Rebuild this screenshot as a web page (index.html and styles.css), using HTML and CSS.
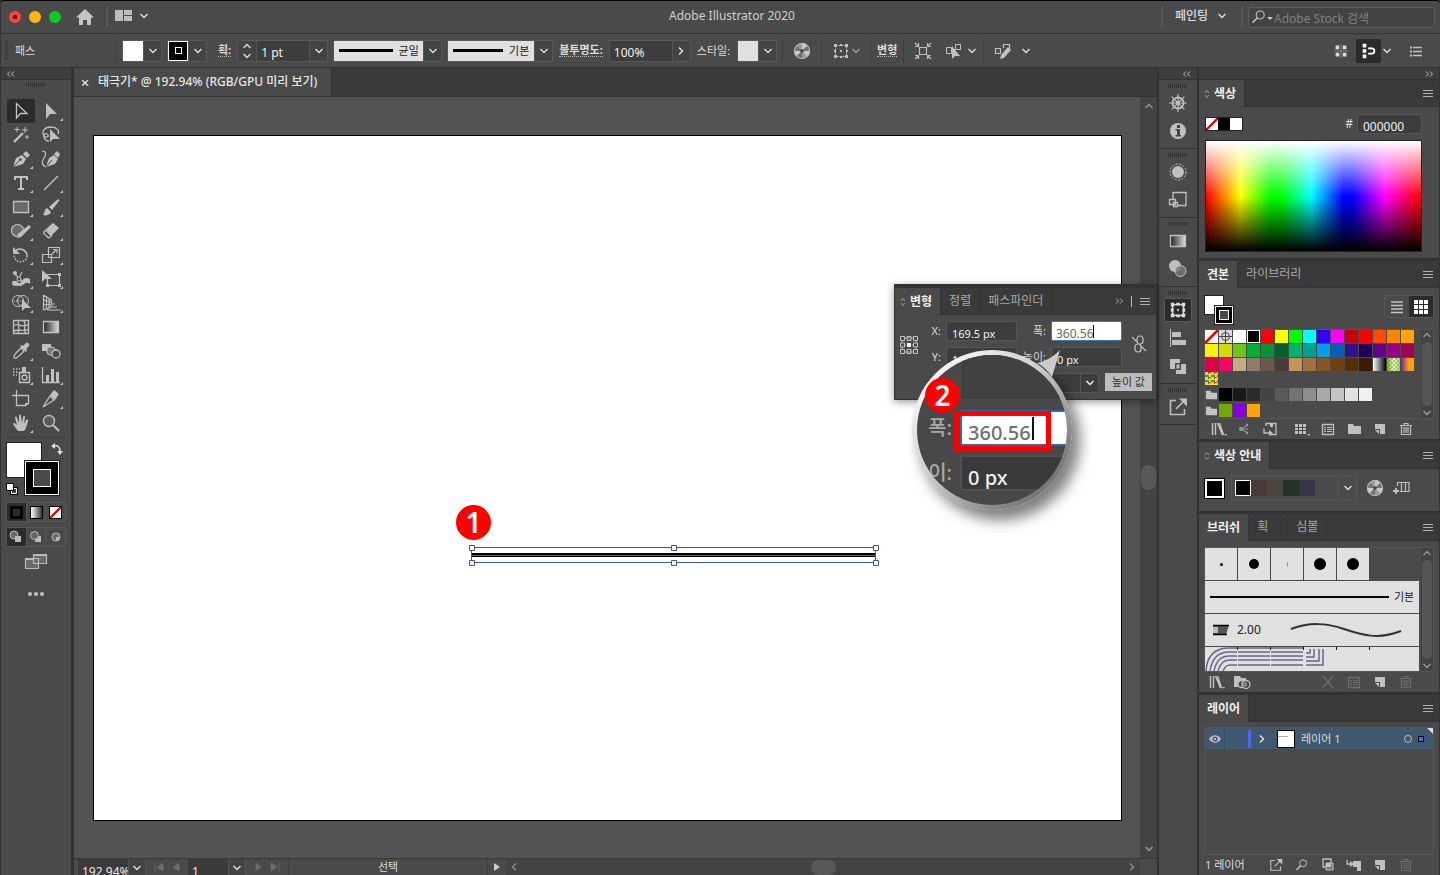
FILE: index.html
```html
<!DOCTYPE html>
<html lang="ko">
  <head>
    <meta charset="UTF-8" />
    <meta name="viewport" content="width=device-width, initial-scale=1.0" />
    <title>Adobe Illustrator 2020</title>
    <link rel="stylesheet" href="styles.css" />
  </head>
  <body>
    <!-- shared icons -->
    <svg class="defs" aria-hidden="true">
      <defs>
        <linearGradient id="fade"><stop offset="0" stop-color="#222" /><stop offset="1" stop-color="#ddd" /></linearGradient>
      </defs>
      <symbol id="down" viewBox="0 0 10 10"><path d="M1.500 3 5 6.500 8.500 3" fill="none" stroke="currentColor" stroke-width="1.500" /></symbol>
      <symbol id="up" viewBox="0 0 10 10"><path d="M1.500 7 5 3.500 8.500 7" fill="none" stroke="currentColor" stroke-width="1.300" /></symbol>
      <symbol id="right" viewBox="0 0 10 10"><path d="M3 1.500 6.500 5 3 8.500" fill="none" stroke="currentColor" stroke-width="1.500" /></symbol>
      <symbol id="left" viewBox="0 0 10 10"><path d="M7 1.500 3.500 5 7 8.500" fill="none" stroke="currentColor" stroke-width="1.500" /></symbol>
      <symbol id="dleft" viewBox="0 0 10 10"><path d="M4 2.500 1.500 5 4 7.500M8 2.500 5.500 5 8 7.500" fill="none" stroke="currentColor" /></symbol>
      <symbol id="dright" viewBox="0 0 10 10"><path d="M2 2.500 4.500 5 2 7.500M6 2.500 8.500 5 6 7.500" fill="none" stroke="currentColor" /></symbol>
      <symbol id="menu" viewBox="0 0 12 12"><path d="M1 3.500h10M1 6.500h10M1 9.500h10" stroke="currentColor" /></symbol>
      <symbol id="updown" viewBox="0 0 6 10"><path d="M1 4 3 1.500 5 4M1 6l2 2.500L5 6" fill="none" stroke="currentColor" /></symbol>

      <symbol id="wheel" viewBox="0 0 20 20">
        <circle cx="10" cy="10" r="8" fill="#999" />
        <path d="M10 10V2A8 8 0 0 1 15.700 4.300ZM10 10 18 10A8 8 0 0 1 15.700 15.700ZM10 10 4.300 15.700A8 8 0 0 1 2 10Z" fill="#c8c8c8" />
        <path d="M10 10 15.700 4.300A8 8 0 0 1 18 10ZM10 10 10 18A8 8 0 0 1 4.300 15.700Z" fill="#707070" />
        <path d="M10 10 2 10A8 8 0 0 1 4.300 4.300Z" fill="#777" /><circle cx="10" cy="10" r="1.800" fill="#444" />
        <circle cx="10" cy="10" r="7.500" fill="none" stroke="#bbb" />
      </symbol>
      <symbol id="align" viewBox="0 0 20 20"><path d="M4.500 4.500h11v11h-11z" fill="none" stroke="currentColor" stroke-dasharray="2 1" /><path d="M3 3h3v3H3zM14 3h3v3h-3zM3 14h3v3H3zM14 14h3v3h-3zM9 3h2v2H9zM9 15h2v2H9zM3 9h2v2H3zM15 9h2v2h-2zM9 9h2v2H9z" fill="currentColor" /></symbol>
      <symbol id="bounds" viewBox="0 0 20 20"><path d="M4 4h12v12H4z" fill="none" stroke="currentColor" stroke-width="1.500" /><path d="M2 2h4v4H2zM14 2h4v4h-4zM2 14h4v4H2zM14 14h4v4h-4zM8 2h4v3H8zM8 15h4v3H8zM2 8h3v4H2zM15 8h3v4h-3zM9 9h2v2H9z" fill="currentColor" /></symbol>
      <symbol id="isolate" viewBox="0 0 20 20"><path d="M6.500 6.500h7v7h-7z" fill="none" stroke="currentColor" stroke-width="1.200" /><path d="M2 2l3 3M18 2l-3 3M2 18l3-3M18 18l-3-3M5.500 2v3.500H2M14.500 2v3.500H18M5.500 18v-3.500H2M14.500 18v-3.500H18" fill="none" stroke="currentColor" stroke-width="1.200" /></symbol>
      <symbol id="similar" viewBox="0 0 20 20"><path d="M2.500 6.500h5v6h-5zM11.500 3.500h5v5h-5zM7.500 9H11" fill="none" stroke="currentColor" /><path d="M8 5v13l3-3 5 0z" fill="currentColor" /></symbol>
      <symbol id="editsim" viewBox="0 0 20 20"><path d="M2.500 7.500h5v5h-5zM10.500 7V3.500h6v5" fill="none" stroke="currentColor" stroke-width="1.200" /><path d="M7 18l1-4 7-8 3 3-7 8z" fill="currentColor" /></symbol>
      <symbol id="gridicon" viewBox="0 0 20 20"><path d="M4 4h4v4H4zM12 4h4v4h-4zM4 12h4v4H4zM12 12h4v4h-4z" fill="currentColor" /><path d="M2 10h16M10 2v16" stroke="#888" /></symbol>
      <symbol id="snap" viewBox="0 0 20 20"><path d="M3 2h4v4H3zM3 8h4v4H3zM3 14h4v4H3zM9 6h3v2H9zM9 12h3v2H9z" fill="currentColor" /><path d="M11 7h2a3 3 0 0 1 0 6h-2" fill="none" stroke="currentColor" stroke-width="2" /></symbol>
      <symbol id="list" viewBox="0 0 20 20"><path d="M7 6.500h9M7 10.500h9M7 14.500h9" stroke="currentColor" stroke-width="1.300" /><path d="M4 5.500h2v2H4zM4 9.500h2v2H4zM4 13.500h2v2H4z" fill="currentColor" /></symbol>
      <symbol id="search" viewBox="0 0 20 20"><circle cx="11.500" cy="7.500" r="5" fill="none" stroke="currentColor" stroke-width="1.400" /><path d="M8 11l-6 6" stroke="currentColor" stroke-width="2" /></symbol>

      <!-- tools -->
      <symbol id="t-select" viewBox="0 0 20 20"><path d="M5.500 2.500v14.500l4-4.500h6.500z" fill="none" stroke="currentColor" stroke-width="1.300" /></symbol>
      <symbol id="t-direct" viewBox="0 0 20 20"><path d="M5 2v16l4-5h7z" fill="currentColor" /></symbol>
      <symbol id="t-wand" viewBox="0 0 20 20"><path d="M3 17 12 8" stroke="currentColor" stroke-width="2.400" /><path d="M14 2v6M11 5h6M6 2v5M3.500 4.500h5M16 10v4M14 12h4" stroke="currentColor" /></symbol>
      <symbol id="t-lasso" viewBox="0 0 20 20"><path d="M3 11C0 6 4 2 10 2s9 4 7 7M3 11c2 2 5 1 4-1S3 8 3 11s2 5 5 5" fill="none" stroke="currentColor" stroke-width="1.300" /><path d="M9 4v13l3-3h7z" fill="currentColor" /></symbol>
      <symbol id="t-pen" viewBox="0 0 20 20"><path d="M2 18 5 9l6-3 4 4-3 5z" fill="currentColor" /><path d="M12 5l3-3 4 4-3 3z" fill="currentColor" /><path d="M2 18l7-7" stroke="#4a4a4a" /><circle cx="9.500" cy="10.500" r="1.300" fill="#4a4a4a" /></symbol>
      <symbol id="t-curve" viewBox="0 0 20 20"><path d="M5 18 8 9l5-3 4 4-3 5z" fill="currentColor" /><path d="M13 5l3-3 3 3-2 4z" fill="currentColor" /><path d="M5 18l6-7" stroke="#4a4a4a" /><path d="M1 2c5 0 4 4 2 7s-3 7 2 9" fill="none" stroke="currentColor" stroke-width="1.200" /></symbol>
      <symbol id="t-type" viewBox="0 0 20 20"><path d="M4 7V4h12v3M10 4v12M7 16h6" fill="none" stroke="currentColor" stroke-width="2" /></symbol>
      <symbol id="t-line" viewBox="0 0 20 20"><path d="M3 17 17 3" stroke="currentColor" stroke-width="1.400" /></symbol>
      <symbol id="t-rect" viewBox="0 0 20 20"><path d="M2.500 4.500h15v11h-15z" fill="#6a6a6a" stroke="currentColor" stroke-width="1.300" /></symbol>
      <symbol id="t-brush" viewBox="0 0 20 20"><path d="M8 10 17 2l1.500 1.500L11 13z" fill="currentColor" /><path d="M2 18c2-2 1-6 4-7l4 4c-1 3-5 4-8 3z" fill="currentColor" /></symbol>
      <symbol id="t-shaper" viewBox="0 0 20 20"><circle cx="6.500" cy="9.500" r="6" fill="#6a6a6a" stroke="currentColor" stroke-width="1.200" /><path d="M6 17l1-4L18 4l2 2-10 10z" fill="currentColor" /></symbol>
      <symbol id="t-eraser" viewBox="0 0 20 20"><path d="M5 8 12 2l6 5-8 8z" fill="currentColor" /><path d="M4.500 9 2.500 12l5 5 3-2z" fill="none" stroke="currentColor" stroke-width="1.300" /></symbol>
      <symbol id="t-rotate" viewBox="0 0 20 20"><path d="M4 6c5-4 12-1 12 5" fill="none" stroke="currentColor" stroke-width="1.500" /><path d="M2 2v7h7z" fill="currentColor" /><path d="M16 11c0 7-12 9-13-1" fill="none" stroke="currentColor" stroke-width="1.500" stroke-dasharray="1.500 1.500" /></symbol>
      <symbol id="t-scale" viewBox="0 0 20 20"><path d="M7.500 2.500h11v10h-11zM1.500 9.500h9v8h-9z" fill="none" stroke="currentColor" stroke-width="1.200" /><path d="M11 9l4-4M12 4.500h4v4" fill="none" stroke="currentColor" stroke-width="1.200" /></symbol>
      <symbol id="t-width" viewBox="0 0 20 20"><path d="M1 13c4-4 6 4 9 0s4-5 9-3v5c-5-4-7 3-11 2S3 18 1 15z" fill="currentColor" /><path d="M3 4l10 11M4 17 11 3" stroke="currentColor" stroke-width="1.200" /><circle cx="4" cy="4" r="2" fill="currentColor" /><circle cx="8" cy="10" r="2" fill="#4a4a4a" stroke="currentColor" /></symbol>
      <symbol id="t-free" viewBox="0 0 20 20"><path d="M6.500 5.500h12v11h-12z" fill="none" stroke="currentColor" stroke-width="1.200" /><path d="M17 4h3v3h-3zM17 15h3v3h-3zM5 15h3v3H5zM1 1v12l3-3h7z" fill="currentColor" /></symbol>
      <symbol id="t-build" viewBox="0 0 20 20"><circle cx="7" cy="8" r="5.500" fill="none" stroke="currentColor" /><circle cx="12" cy="8" r="5.500" fill="none" stroke="currentColor" /><path d="M3 8h10" stroke="currentColor" stroke-dasharray="1 1" /><path d="M11 6v12l3-3h6z" fill="currentColor" /></symbol>
      <symbol id="t-persp" viewBox="0 0 20 20"><path d="M2.500 2v15M2.500 2l8 5v7l-8 3M5.500 4v12M8 6v9M2.500 7l8 2M2.500 12l8-1" fill="none" stroke="currentColor" stroke-width="1.200" /><path d="M10 11h4M9 14h7M6 17h14" stroke="#999" stroke-width="1.500" /></symbol>
      <symbol id="t-mesh" viewBox="0 0 20 20"><path d="M2.500 3.500h15v13h-15zM2 9c5-5 8 4 16-2M2 15c5-5 9 1 16-3M8 3c-3 4 3 9-2 14M12 3c5 4-1 9 3 14" fill="none" stroke="currentColor" stroke-width="1.300" /></symbol>
      <symbol id="t-grad" viewBox="0 0 20 20"><path d="M2.500 4.500h15v11h-15z" fill="url(#fade)" stroke="currentColor" stroke-width="1.300" /></symbol>
      <symbol id="t-drop" viewBox="0 0 20 20"><path d="M3 17c-1-2 1-3 2-5l5-5 3 3-5 5c-2 1-3 3-5 2z" fill="none" stroke="currentColor" stroke-width="1.300" /><path d="M9 5l6 6 1-2-1-1 3-3c1-2-1-4-3-3l-3 3-1-1z" fill="currentColor" /></symbol>
      <symbol id="t-blend" viewBox="0 0 20 20"><path d="M1 3h9v7H1z" fill="currentColor" /><rect x="6" y="6" width="8" height="8" rx="3" fill="#777" stroke="currentColor" /><circle cx="15" cy="13" r="4" fill="#4a4a4a" stroke="currentColor" stroke-width="1.300" /></symbol>
      <symbol id="t-spray" viewBox="0 0 20 20"><path d="M8.500 7.500h10v10h-10z" fill="none" stroke="currentColor" stroke-width="1.400" /><path d="M11 2h4v5h-4z" fill="currentColor" /><circle cx="13.500" cy="12.500" r="2.500" fill="none" stroke="currentColor" stroke-width="1.300" /><path d="M2 4h7M2 7h5M2 10h4" stroke="currentColor" stroke-width="1.500" stroke-dasharray="1.500 1.500" /></symbol>
      <symbol id="t-graph" viewBox="0 0 20 20"><path d="M1.500 2v15.500H19" fill="none" stroke="currentColor" stroke-width="1.300" /><path d="M5 10h3v7H5zM10 4h3v13h-3zM15 7h3v10h-3z" fill="currentColor" /></symbol>
      <symbol id="t-artb" viewBox="0 0 20 20"><path d="M5.500 6.500h12v8l-3 2h-9zM1 6.500h4M5.500 1v5" fill="none" stroke="currentColor" stroke-width="1.300" /><path d="M14 17v-3h4z" fill="currentColor" /></symbol>
      <symbol id="t-slice" viewBox="0 0 20 20"><path d="M2 18 9 7l4 4z" fill="none" stroke="currentColor" stroke-width="1.300" /><path d="M9 6l4-5 5 4-4 6z" fill="currentColor" /></symbol>
      <symbol id="t-hand" viewBox="0 0 20 20"><path d="M7 18C5 15 3 13 2 11c1-2 2-1 4 1L4 5c0-2 2-2 2 0l2 5V3c0-2 2-2 2 0l1 7 1-6c1-2 2-1 2 0l-1 7 2-4c1-1 3 0 2 1-1 4-2 8-4 10z" fill="currentColor" /></symbol>
      <symbol id="t-zoom" viewBox="0 0 20 20"><circle cx="8" cy="8" r="5.500" fill="#5a5a5a" stroke="currentColor" stroke-width="1.400" /><path d="M12 12l6 6" stroke="currentColor" stroke-width="2" /></symbol>
      <symbol id="screen" viewBox="0 0 24 18"><path d="M1.500 5.500h13v10h-13zM9.500 1.500h13v9h-13z" fill="#6a6a6a" stroke="currentColor" stroke-width="1.200" /><path d="M1 5h8v2H1zM9 1h14v2H9z" fill="currentColor" /></symbol>
      <symbol id="swap" viewBox="0 0 14 14"><path d="M4 4c4-1 6 1 6 6" fill="none" stroke="currentColor" stroke-width="1.500" /><path d="M5 1v6L1 4zM7 9h6l-3 4z" fill="currentColor" /></symbol>
      <symbol id="defaults" viewBox="0 0 12 12"><path d="M4 4h8v8H4z" fill="#000" /><path d="M5.500 5.500h5v5h-5z" fill="#444" stroke="#fff" /><path d="M.5.500h7v7h-7z" fill="#fff" stroke="#000" /></symbol>
      <symbol id="draw1" viewBox="0 0 14 14"><circle cx="5" cy="5" r="4" fill="#6a6a6a" stroke="currentColor" /><path d="M6 6h6v6H6z" fill="currentColor" /></symbol>
      <symbol id="draw2" viewBox="0 0 14 14"><path d="M6 6h6v6H6z" fill="currentColor" /><circle cx="5.500" cy="5.500" r="4" fill="#666" stroke="currentColor" /></symbol>
      <symbol id="draw3" viewBox="0 0 14 14"><circle cx="7" cy="7" r="4" fill="#6a6a6a" stroke="currentColor" /><path d="M7 7h4l-1 3-3 1z" fill="currentColor" /></symbol>

      <!-- dock -->
      <symbol id="d-helm" viewBox="0 0 20 20"><circle cx="10" cy="10" r="5.500" fill="none" stroke="currentColor" stroke-width="1.800" /><path d="M10 1v18M1 10h18M3.600 3.600l12.800 12.800M3.600 16.400 16.400 3.600" stroke="currentColor" stroke-width="1.200" /><circle cx="10" cy="10" r="2" fill="currentColor" /></symbol>
      <symbol id="d-info" viewBox="0 0 20 20"><circle cx="10" cy="10" r="8" fill="currentColor" /><path d="M9 4h3v3H9zM7.500 8H12v6h1v1.500H7.500V14H9V9.500H7.500z" fill="#444" /></symbol>
      <symbol id="d-sun" viewBox="0 0 20 20"><circle cx="10" cy="10" r="6" fill="currentColor" /><circle cx="10" cy="10" r="8" fill="none" stroke="currentColor" stroke-dasharray="2 1.500" /></symbol>
      <symbol id="d-style" viewBox="0 0 20 20"><path d="M5 9V2.500h13v13h-8" fill="none" stroke="currentColor" stroke-width="1.300" /><path d="M1.500 9.500h6v5h-6zM5.500 12.500h4v4h-4z" fill="none" stroke="currentColor" stroke-width="1.300" /></symbol>
      <symbol id="d-trans" viewBox="0 0 20 20"><circle cx="7" cy="7" r="6" fill="currentColor" /><circle cx="12.500" cy="12" r="5.500" fill="#777" fill-opacity=".8" stroke="currentColor" /></symbol>
      <symbol id="d-align" viewBox="0 0 20 20"><path d="M2 1h1v18H2zM4 4h9v5H4zM4 12h14v5H4z" fill="currentColor" /></symbol>
      <symbol id="d-path" viewBox="0 0 20 20"><path d="M2 3h10v4H7v6H2zM13 8h5v10H8v-4h5zM8.500 8.500h3v4h-3z" fill="currentColor" /></symbol>
      <symbol id="export" viewBox="0 0 20 20"><path d="M8 3.500H2.500v14h14V12" fill="none" stroke="currentColor" stroke-width="1.600" /><path d="M8 12l8-8" stroke="currentColor" stroke-width="1.600" /><path d="M11 1.500h8v8z" fill="currentColor" /></symbol>

      <!-- panel footers -->
      <symbol id="library" viewBox="0 0 20 20"><path d="M4.500 4v12M7.500 4v12M9.500 4l5 12M11.500 4l4 12" stroke="currentColor" stroke-width="1.500" fill="none" /><path d="M16 15h3l-1 2z" fill="currentColor" /></symbol>
      <symbol id="share" viewBox="0 0 20 20"><path d="M14 6l-7 4 7 4M14 10H6" fill="none" stroke="currentColor" /><circle cx="7" cy="10" r="2" fill="currentColor" /><circle cx="13" cy="6" r="1.300" fill="currentColor" /><circle cx="13" cy="14" r="1.300" fill="currentColor" /></symbol>
      <symbol id="import" viewBox="0 0 20 20"><path d="M6 7V4.500h10v11H9M4 9.500v4.500h6" fill="none" stroke="currentColor" stroke-width="1.300" /><path d="M9 11l4 3-4 3zM10 4h3v4h-3z" fill="currentColor" /></symbol>
      <symbol id="kinds" viewBox="0 0 20 20"><path d="M3 5h11v10H3z" fill="currentColor" /><path d="M3 8.500h11M3 11.500h11M6.500 5v10M10.500 5v10" stroke="#4a4a4a" /><path d="M15 15h3l-1 2z" fill="currentColor" /></symbol>
      <symbol id="options" viewBox="0 0 20 20"><path d="M4.500 5.500h11v10h-11z" fill="none" stroke="currentColor" stroke-width="1.300" /><path d="M6 8.500h2M9 8.500h5M6 10.500h2M9 10.500h5M6 12.500h2M9 12.500h5" stroke="currentColor" /></symbol>
      <symbol id="folder" viewBox="0 0 20 20"><path d="M4 5h5l1 2h7v8H4z" fill="currentColor" /></symbol>
      <symbol id="newitem" viewBox="0 0 20 20"><path d="M5 5h10v10h-5v-5H5z" fill="currentColor" /><path d="M5 11h4v4z" fill="currentColor" /></symbol>
      <symbol id="trash" viewBox="0 0 20 20"><path d="M4 6.500h12M8 6V4.500h4V6M5.500 7v8.500h9V7M8 8v6M10 8v6M12 8v6" fill="none" stroke="currentColor" stroke-width="1.200" /></symbol>
      <symbol id="cclib" viewBox="0 0 20 20"><path d="M2 4h6l1 2h5v4H2zM2 9h4v6H2z" fill="currentColor" /><circle cx="9.500" cy="12" r="3.500" fill="#4a4a4a" stroke="currentColor" stroke-width="1.300" /><circle cx="14" cy="12.500" r="4" fill="#4a4a4a" stroke="currentColor" stroke-width="1.300" /><circle cx="13" cy="12.500" r="1.500" fill="none" stroke="currentColor" /></symbol>
      <symbol id="mask" viewBox="0 0 20 20"><path d="M5 4h8v8H5z" fill="none" stroke="currentColor" stroke-width="1.300" /><path d="M8 8h7v7H8z" fill="#777" stroke="currentColor" /><path d="M8 8h5v4H8z" fill="currentColor" /></symbol>
      <symbol id="sublayer" viewBox="0 0 20 20"><path d="M3 5v4h5" fill="none" stroke="currentColor" stroke-width="1.300" /><path d="M6 6l4 3-4 3zM9 6h8v10h-4v-4H9z" fill="currentColor" /></symbol>
      <symbol id="chain" viewBox="0 0 20 20"><path d="M8 8V5a3 3 0 0 1 6 0v2a3 3 0 0 1-3 3M12 12v3a3 3 0 0 1-6 0v-2a3 3 0 0 1 3-3M3 3l14 14" fill="none" stroke="currentColor" stroke-width="1.200" /></symbol>
      <symbol id="addgroup" viewBox="0 0 20 20"><path d="M6 4.500h12v9H9M10.500 5v8M14.500 5v8M6.500 5v3" fill="none" stroke="currentColor" stroke-width="1.200" /><path d="M2 13h6M5 10v6" stroke="currentColor" stroke-width="1.800" /></symbol>
    </svg>

    <header class="titlebar">
      <div class="lights">
        <button class="light red" aria-label="닫기"></button>
        <button class="light yellow" aria-label="최소화"></button>
        <button class="light green" aria-label="확대"></button>
      </div>
      <button class="home" aria-label="홈"><svg width="20" height="18" viewBox="0 0 20 18"><path d="M10 1 1 9.500h3V17h4v-5h4v5h4V9.500h3z" fill="#c4c4c4" /></svg></button>
      <span class="rule"></span>
      <button class="arrange" aria-label="문서 정렬"><svg width="18" height="12" viewBox="0 0 18 12"><path d="M0 0h8v11H0zM9 0h8v5H9zM9 6h8v5H9z" fill="#bdbdbd" /></svg><svg class="i10"><use href="#down" /></svg></button>
      <h1>Adobe Illustrator 2020</h1>
      <span class="rule"></span>
      <label class="workspaces"><select aria-label="작업 영역"><option>페인팅</option></select><svg class="i10"><use href="#down" /></svg></label>
      <span class="rule"></span>
      <label class="stock"><svg class="i20"><use href="#search" /></svg><span class="tri"></span><input type="search" placeholder="Adobe Stock 검색" aria-label="Adobe Stock 검색" /></label>
    </header>

    <div class="controlbar">
      <span class="grip-v"></span>
      <span class="kind">패스</span>
      <span class="rule"></span>
      <div class="combo fill"><button class="swatch white" aria-label="칠"></button><button class="drop" aria-label="칠 열기"><svg class="i10"><use href="#down" /></svg></button></div>
      <div class="combo stroke"><button class="swatch black" aria-label="선"><i></i></button><button class="drop" aria-label="선 열기"><svg class="i10"><use href="#down" /></svg></button></div>
      <label class="dotted bold" for="weight">획:</label>
      <div class="combo weight"><button class="drop step" aria-label="단계"><svg class="i10"><use href="#up" /></svg><svg class="i10"><use href="#down" /></svg></button><input id="weight" value="1 pt" /><button class="drop" aria-label="두께"><svg class="i10"><use href="#down" /></svg></button></div>
      <div class="combo"><button class="profile wide"><i></i>균일</button><button class="drop" aria-label="폭 프로필"><svg class="i10"><use href="#down" /></svg></button></div>
      <div class="combo basic"><button class="profile"><i></i>기본</button><button class="drop" aria-label="브러쉬"><svg class="i10"><use href="#down" /></svg></button></div>
      <label class="dotted bold opacity" for="opacity">불투명도:</label>
      <div class="combo"><input id="opacity" value="100%" /><button class="drop" aria-label="불투명도"><svg class="i10"><use href="#right" /></svg></button></div>
      <span class="style-label">스타일:</span>
      <div class="combo styles"><button class="swatch light-grey" aria-label="스타일"></button><button class="drop" aria-label="스타일 열기"><svg class="i10"><use href="#down" /></svg></button></div>
      <span class="rule tight"></span>
      <button class="ico" aria-label="색상 변경"><svg class="i20"><use href="#wheel" /></svg></button>
      <span class="rule tight"></span>
      <button class="ico" aria-label="정렬"><svg class="i20"><use href="#align" /></svg><svg class="i10 dim"><use href="#down" /></svg></button>
      <span class="rule tight"></span>
      <button class="dotted bold">변형</button>
      <span class="rule tight"></span>
      <button class="ico" aria-label="격리"><svg class="i20"><use href="#isolate" /></svg></button>
      <button class="ico pick" aria-label="유사 선택"><svg class="i20"><use href="#similar" /></svg><svg class="i10"><use href="#down" /></svg></button>
      <span class="rule tight"></span>
      <button class="ico" aria-label="유사 편집"><svg class="i20"><use href="#editsim" /></svg><svg class="i10 spaced"><use href="#down" /></svg></button>
      <div class="right-tools">
        <button class="ico" aria-label="픽셀 격자"><svg class="i18"><use href="#gridicon" /></svg></button>
        <button class="ico on" aria-label="스냅"><svg class="i18"><use href="#snap" /></svg></button>
        <button class="ico slim" aria-label="스냅 옵션"><svg class="i10"><use href="#down" /></svg></button>
        <button class="ico last" aria-label="메뉴"><svg class="i20"><use href="#list" /></svg></button>
      </div>
    </div>

    <main class="app">
      <aside class="toolbox">
        <div class="strip"><svg class="i10"><use href="#dleft" /></svg></div>
        <span class="grip"></span>
        <div class="tools" id="tools"></div>
        <div class="paint">
          <button class="p-fill" aria-label="칠"></button>
          <button class="p-stroke" aria-label="선"><i></i></button>
          <svg class="p-swap" width="14" height="14"><use href="#swap" /></svg>
          <svg class="p-default" width="12" height="12"><use href="#defaults" /></svg>
        </div>
        <div class="triple">
          <button class="on" aria-label="색상"><i class="c-solid"></i></button>
          <button aria-label="그레이디언트"><i class="c-grad"></i></button>
          <button aria-label="없음"><i class="c-none"></i></button>
        </div>
        <div class="triple">
          <button class="on" aria-label="표준 그리기"><svg width="14" height="14"><use href="#draw1" /></svg></button>
          <button aria-label="배경 그리기"><svg width="14" height="14"><use href="#draw2" /></svg></button>
          <button aria-label="내부 그리기"><svg width="14" height="14"><use href="#draw3" /></svg></button>
        </div>
        <button class="screen" aria-label="화면 모드"><svg width="24" height="18"><use href="#screen" /></svg></button>
        <button class="dots" aria-label="도구 모음 편집"><i></i><i></i><i></i></button>
      </aside>

      <section class="document">
        <div class="tabbar">
          <div class="doc-tab"><button aria-label="탭 닫기">×</button><span>태극기* @ 192.94% (RGB/GPU 미리 보기)</span></div>
        </div>
        <div class="view">
          <div class="stage">
            <div class="artboard">
              <svg class="path" width="407" height="18" viewBox="0 0 407 18">
                <path d="M1 7h405v4H1z" fill="#000" />
                <path d="M1 9.500h405" stroke="#5a5aa8" />
                <path d="M1.500 1.500h404v15h-404z" fill="none" stroke="#3d56a8" />
                <path d="M-.500-.500h5v5h-5zM201.500-.500h5v5h-5zM403.500-.500h5v5h-5zM-.500 14.500h5v5h-5zM201.500 14.500h5v5h-5zM403.500 14.500h5v5h-5z" fill="#fff" stroke="#3d56a8" />
              </svg>
              <span class="badge one">1</span>
            </div>
          </div>
          <div class="vscroll"><svg class="i10"><use href="#up" /></svg><i></i><svg class="i10"><use href="#down" /></svg></div>
        </div>
        <footer class="status">
          <input class="zoomlevel" value="192.94%" aria-label="확대 비율" /><button class="drop" aria-label="확대 비율 목록"><svg class="i10"><use href="#down" /></svg></button>
          <button class="nav" aria-label="처음 이전"><svg width="32" height="10" viewBox="0 0 32 10"><path d="M4 1v8M12 1v8L6 5zM28 1v8l-6-4z" fill="#6c6c6c" stroke="#6c6c6c" stroke-width=".8" /></svg></button>
          <input class="board" value="1" aria-label="대지" /><button class="drop" aria-label="대지 목록"><svg class="i10"><use href="#down" /></svg></button>
          <button class="nav" aria-label="다음 마지막"><svg width="32" height="10" viewBox="0 0 32 10"><path d="M5 1v8l5-4zM20 1v8l6-4zM28 1v8" fill="#6c6c6c" stroke="#6c6c6c" stroke-width=".8" /></svg></button>
          <span class="current">선택</span>
          <button class="play" aria-label="상태 메뉴"></button>
          <div class="hscroll"><svg class="i10"><use href="#left" /></svg><i></i><svg class="i10"><use href="#right" /></svg></div>
        </footer>

        <!-- floating transform panel -->
        <div class="transform">
          <div class="tabs">
            <button class="tab on"><svg width="6" height="10"><use href="#updown" /></svg>변형</button><button class="tab">정렬</button><button class="tab">패스파인더</button>
            <span class="tab-tools"><svg class="i10"><use href="#dright" /></svg><i></i><svg class="i12"><use href="#menu" /></svg></span>
          </div>
          <div class="transform-body">
            <svg class="refpoint" width="20" height="20" viewBox="0 0 20 20"><path d="M5 3h10M5 10h2M13 10h2M5 17h10M3 5v3M3 12v3M10 5v1M10 14v1M17 5v3M17 12v3" stroke="#aaa" /><path d="M1.500 1.500h4v4h-4zM8 1.500h4v4H8zM14.500 1.500h4v4h-4zM1.500 8h4v4h-4zM14.500 8h4v4h-4zM1.500 14.500h4v4h-4zM8 14.500h4v4H8zM14.500 14.500h4v4h-4z" fill="none" stroke="#c4c4c4" /><path d="M8 8h4v4H8z" fill="#fff" /></svg>
            <div class="fields">
              <label for="tx">X:</label><input id="tx" value="169.5 px" /><label for="tw">폭:</label><div class="focusbox"><input id="tw" value="360.56" /><i></i></div>
              <label for="ty">Y:</label><input id="ty" value="1" /><label for="th">높이:</label><input id="th" value="0 px" />
              <span></span><span></span><span></span><div class="angle"><button class="drop" aria-label="각도"><svg class="i10"><use href="#down" /></svg></button></div>
            </div>
            <svg class="i20 chain"><use href="#chain" /></svg>
          </div>
          <span class="tip">높이 값</span>
        </div>

        <div class="magnifier">
          <div class="lens">
            <i class="lens-top"></i>
            <div class="lens-row"><label for="mw">폭:</label><input id="mw" class="focus" value="360.56" /></div>
            <div class="lens-row"><label for="mh">이:</label><input id="mh" value="0 px" /></div>
          </div>
          <i class="caret"></i>
          <i class="redbox"></i>
        </div>
        <svg class="pointer" width="24" height="28" viewBox="0 0 24 28"><path d="M0 13C8 12 17 6 23 0c-2 7-5 17-8 27C11 21 6 16 0 13z" fill="#ccc" /></svg>
        <span class="badge two">2</span>
      </section>

      <aside class="dock">
        <div class="strip end"><svg class="i10"><use href="#dleft" /></svg></div>
        <div class="dock-group"><span class="grip"></span><button aria-label="색상 테마"><svg class="i20"><use href="#d-helm" /></svg></button><button aria-label="정보"><svg class="i20"><use href="#d-info" /></svg></button></div>
        <div class="dock-group"><span class="grip"></span><button aria-label="모양"><svg class="i20"><use href="#d-sun" /></svg></button><button aria-label="그래픽 스타일"><svg class="i20"><use href="#d-style" /></svg></button></div>
        <div class="dock-group"><span class="grip"></span><button aria-label="그레이디언트"><svg class="i20"><use href="#t-grad" /></svg></button><button aria-label="투명도"><svg class="i20"><use href="#d-trans" /></svg></button></div>
        <div class="dock-group"><span class="grip"></span><button class="on" aria-label="변형"><svg class="i18"><use href="#bounds" /></svg></button><button aria-label="정렬"><svg class="i20"><use href="#d-align" /></svg></button><button aria-label="패스파인더"><svg class="i20"><use href="#d-path" /></svg></button></div>
        <div class="dock-group"><span class="grip"></span><button aria-label="에셋 내보내기"><svg class="i20"><use href="#export" /></svg></button></div>
      </aside>

      <aside class="panels">
        <div class="strip end"><svg class="i10"><use href="#dright" /></svg></div>

        <section class="panel color">
          <div class="tabs"><button class="tab on"><svg width="6" height="10"><use href="#updown" /></svg>색상</button><span class="tab-tools"><svg class="i12"><use href="#menu" /></svg></span></div>
          <div class="hexrow">
            <div class="mini"><i class="c-none"></i><i class="blk"></i><i class="wht"></i></div>
            <label for="hex">#</label><input id="hex" value="000000" />
          </div>
          <div class="spectrum"></div>
        </section>

        <section class="panel swatches">
          <div class="tabs"><button class="tab on">견본</button><button class="tab">라이브러리</button><span class="tab-tools"><svg class="i12"><use href="#menu" /></svg></span></div>
          <div class="swatch-head">
            <div class="pair"><i class="pf"></i><i class="ps"><b></b></i></div>
            <div class="modes"><button aria-label="목록 보기"><svg width="14" height="14" viewBox="0 0 14 14"><path d="M1 2h12M1 5.500h12M1 9h12M1 12.500h12" stroke="#c4c4c4" stroke-width="1.500" /></svg></button><button class="on" aria-label="축소판 보기"><svg width="14" height="14" viewBox="0 0 14 14"><path d="M0 0h4v4H0zM5 0h4v4H5zM10 0h4v4h-4zM0 5h4v4H0zM5 5h4v4H5zM10 5h4v4h-4zM0 10h4v4H0zM5 10h4v4H5zM10 10h4v4h-4z" fill="#fff" /></svg></button></div>
          </div>
          <div class="listbox">
            <div class="rows" id="swatchrows"></div>
            <div class="scroller"><svg class="i10"><use href="#up" /></svg><i></i><svg class="i10"><use href="#down" /></svg></div>
          </div>
          <div class="foot"><svg class="i20"><use href="#library" /></svg><svg class="i20 dim"><use href="#share" /></svg><svg class="i20 gap"><use href="#import" /></svg><svg class="i20"><use href="#kinds" /></svg><svg class="i20"><use href="#options" /></svg><svg class="i20"><use href="#folder" /></svg><svg class="i20"><use href="#newitem" /></svg><svg class="i20"><use href="#trash" /></svg></div>
        </section>

        <section class="panel guide">
          <div class="tabs"><button class="tab on"><svg width="6" height="10"><use href="#updown" /></svg>색상 안내</button><span class="tab-tools"><svg class="i12"><use href="#menu" /></svg></span></div>
          <div class="guide-body">
            <button class="base" aria-label="기본 색상"></button>
            <div class="harmony"><i class="h1"></i><i class="h2"></i><i class="h3"></i><i class="h4"></i><i class="h5"></i><button class="drop" aria-label="조화 규칙"><svg class="i10"><use href="#down" /></svg></button></div>
            <svg class="i20"><use href="#wheel" /></svg><svg class="i20"><use href="#addgroup" /></svg>
          </div>
        </section>

        <section class="panel brushes">
          <div class="tabs"><button class="tab on">브러쉬</button><button class="tab short">획</button><button class="tab">심볼</button><span class="tab-tools"><svg class="i12"><use href="#menu" /></svg></span></div>
          <div class="listbox">
            <div class="brushlist">
              <div class="dotsrow"><span><i class="b1"></i></span><span><i class="b2"></i></span><span><i class="b3"></i></span><span><i class="b4"></i></span><span><i class="b4"></i></span></div>
              <div class="brush"><i class="bar"></i>기본</div>
              <div class="brush calli"><svg width="18" height="12" viewBox="0 0 18 12"><path d="M1 1h16l-3 10H1z" fill="#555" /><path d="M1 1.500h16M1 10.500h14" stroke="#000" stroke-width="1.500" /><path d="M1 3h5v6H1z" fill="#bbb" /></svg>2.00<svg class="wave" width="112" height="18" viewBox="0 0 112 18"><path d="M1 8C20 1 36 2 54 8s34 11 57 2" fill="none" stroke="#333" stroke-width="2" /></svg></div>
              <div class="brush pattern"><svg width="214" height="24" viewBox="0 0 214 24"><path d="M1 24C2 8 10 1 24 1H98M5 24C7 11 13 5 24 5H98M9 24C11 14 16 9 24 9H98M13 24C15 17 18 13 24 13H98M18 24C20 20 21 18 26 18H98M101 6h4V2M101 10h8V2M101 14h13V2M101 18h17V2" fill="none" stroke="#6d6584" stroke-width="1.500" /><path d="M32.500 0v24M65.500 0v24M98.500 0v24" stroke="#e0e0e0" /><path d="M32.500 0v3M65.500 0v3M98.500 0v3M131.500 0v3M164.500 0v3" stroke="#000" /></svg></div>
            </div>
            <div class="scroller"><svg class="i10"><use href="#up" /></svg><i></i><svg class="i10"><use href="#down" /></svg></div>
          </div>
          <div class="foot"><svg class="i20"><use href="#library" /></svg><svg class="i20 far"><use href="#cclib" /></svg><svg class="i20 off" viewBox="0 0 20 20"><path d="M5 4l10 12M15 4 9 11l-4 4" fill="none" stroke="currentColor" stroke-width="1.500" /></svg><svg class="i20 off"><use href="#options" /></svg><svg class="i20"><use href="#newitem" /></svg><svg class="i20 off"><use href="#trash" /></svg></div>
        </section>

        <section class="panel layers">
          <div class="tabs"><button class="tab on">레이어</button><span class="tab-tools"><svg class="i12"><use href="#menu" /></svg></span></div>
          <div class="layerlist">
            <div class="layer">
              <button class="eye" aria-label="보기"><svg width="14" height="10" viewBox="0 0 14 10"><path d="M1 5c3-5 9-5 12 0-3 5-9 5-12 0z" fill="#bbb" /><circle cx="7" cy="5" r="2.500" fill="#3f5a70" /><circle cx="7" cy="5" r="1" fill="#ddd" /></svg></button>
              <i class="lock"></i><i class="mark"></i>
              <svg class="i10"><use href="#right" /></svg>
              <i class="thumb"></i><span class="name">레이어 1</span>
              <i class="target"></i><i class="sel"></i>
            </div>
          </div>
          <div class="foot"><span class="count">1 레이어</span><svg class="i20 small"><use href="#export" /></svg><svg class="i20 small"><use href="#search" /></svg><svg class="i20"><use href="#mask" /></svg><svg class="i20"><use href="#sublayer" /></svg><svg class="i20"><use href="#newitem" /></svg><svg class="i20 off"><use href="#trash" /></svg></div>
        </section>
      </aside>
    </main>

    <script>
      // tool name and if it has a flyout
      let tools = [
        ["select", 0], ["direct", 1], ["wand", 0], ["lasso", 0], ["pen", 1], ["curve", 0],
        ["type", 1], ["line", 1], ["rect", 1], ["brush", 1], ["shaper", 1], ["eraser", 1],
        ["rotate", 1], ["scale", 1], ["width", 1], ["free", 1], ["build", 1], ["persp", 1],
        ["mesh", 0], ["grad", 0], ["drop", 1], ["blend", 0], ["spray", 1], ["graph", 1],
        ["artb", 0], ["slice", 1], ["hand", 1], ["zoom", 0],
      ];
      document.getElementById("tools").innerHTML = tools
        .map(
          (t, i) =>
            `<button class="tool${i == 0 ? " on" : ""}${t[1] ? " more" : ""}" aria-label="${t[0]}"><svg class="i20"><use href="#t-${t[0]}" /></svg></button>`
        )
        .join("");

      let rows = [
        ["none", "reg", "#fff", "#000", "#f00", "#ff0", "#0f0", "#0ff", "#30f", "#f0f", "#c7000b", "#f00", "#ff4b00", "#ff8400", "#ffa500"],
        ["#fff100", "#cfdc00", "#6fc419", "#00b034", "#009535", "#006030", "#00b368", "#00a092", "#00a0e9", "#0560b8", "#30128c", "#1d0057", "#620088", "#960089", "#a3004f"],
        ["#e0004a", "#ff006b", "#c5aa86", "#927b68", "#6a584c", "#4c3c37", "#c79458", "#a4703f", "#875623", "#6d4012", "#583000", "#3c1c00", "g1", "g2", "g3"],
        ["pat"],
        ["folder", "#000", "#191919", "#2b2b2b", "#444", "#5a5a5a", "#747474", "#8d8d8d", "#a9a9a9", "#c4c4c4", "#e1e1e1", "#f0f0f0"],
        ["folder", "#73a900", "#8600df", "#ffa500"],
      ];
      let box = document.getElementById("swatchrows");
      rows.forEach((row) => {
        let div = document.createElement("div");
        div.className = row[0] == "folder" ? "row group" : "row";
        row.forEach((c) => {
          if (c == "folder") {
            div.innerHTML += '<svg width="13" height="13" viewBox="0 0 14 14"><path d="M1 3h5l1 2h6v7H1z" fill="#c4c4c4" /></svg>';
          } else if (c[0] == "#") {
            div.innerHTML += `<i class="chip${c == "#000" && row[0] == "none" ? " picked" : ""}" style="background:${c}"></i>`;
          } else if (c == "reg") {
            div.innerHTML += '<i class="chip reg"><svg width="13" height="13" viewBox="0 0 13 13"><path d="M6.500 0v13M0 6.500h13" stroke="#444" /><circle cx="6.500" cy="6.500" r="4" fill="none" stroke="#444" /></svg></i>';
          } else {
            div.innerHTML += `<i class="chip ${c == "none" ? "c-none" : c}"></i>`;
          }
        });
        box.append(div);
      });
    </script>
  </body>
</html>
```
FILE: styles.css
```css
* {
  box-sizing: border-box;
}
body {
  margin: 0;
  height: 100vh;
  display: flex;
  flex-direction: column;
  overflow: hidden;
  background: #323232;
  color: #dcdcdc;
  font-family: "Noto Sans", "Noto Sans CJK KR", sans-serif;
  font-size: 11px;
  line-height: 16px;
}
button,
input,
select {
  font: inherit;
  color: inherit;
  margin: 0;
  padding: 0;
  border: 0;
  background: none;
  outline: 0;
}
button {
  display: flex;
  align-items: center;
  justify-content: center;
}
svg {
  display: block;
  flex: none;
}
svg.defs {
  position: absolute;
  width: 0;
  height: 0;
}
i,
b {
  display: block;
  flex: none;
}
.i10 {
  width: 10px;
  height: 10px;
}
.i12 {
  width: 12px;
  height: 12px;
}
.i18 {
  width: 18px;
  height: 18px;
}
.i20 {
  width: 20px;
  height: 20px;
  color: #c0c0c0;
}
.dim {
  color: #999;
}
.off {
  color: #6c6c6c;
}
.bold {
  font-weight: 700;
}

/* title bar */
.titlebar {
  flex: none;
  height: 34px;
  display: flex;
  align-items: center;
  background: #4a4a4a;
  border-top: 1px solid #000;
  border-bottom: 1px solid #333;
  border-left: 1px solid #333;
  padding: 0 5px 0 8px;
  border-radius: 4px 4px 0 0;
}
.lights {
  display: flex;
  gap: 8px;
}
.light {
  width: 12px;
  height: 12px;
  border-radius: 50%;
}
.red {
  background: radial-gradient(#400 20%, #ff4136 30%);
}
.yellow {
  background: #ffb60a;
}
.green {
  background: #0bcb25;
}
.home {
  margin: 0 11px 0 14px;
}
.rule {
  flex: none;
  width: 2px;
  height: 20px;
  background: #585858;
}
.arrange {
  gap: 6px;
  margin-left: 7px;
  padding-bottom: 3px;
}
.titlebar h1 {
  flex: 1;
  margin: 0 0 2px 0;
  padding-left: 154px;
  text-align: center;
  font-size: 12px;
  font-weight: 400;
  color: #cfcfcf;
}
.workspaces {
  display: flex;
  align-items: center;
  margin: 0 14px 0 12px;
  padding-bottom: 2px;
}
.workspaces select {
  appearance: none;
  width: 42px;
  font-size: 12px;
  font-weight: 500;
}
.stock {
  display: flex;
  align-items: center;
  width: 187px;
  height: 21px;
  margin: 0 0 0 5px;
  background: #434343;
  border: 1px solid #5c5c5c;
  border-radius: 3px;
}
.stock .i20 {
  width: 16px;
  margin-left: 2px;
}
.tri {
  border: 3px solid transparent;
  border-top-color: #ccc;
  margin-top: 6px;
}
.stock input {
  flex: 1;
  min-width: 0;
  padding: 3px 0 0 1px;
  font-size: 12px;
}
.stock input::placeholder {
  color: #808080;
}

/* control bar */
.controlbar {
  flex: none;
  height: 34px;
  display: flex;
  align-items: center;
  background: #4a4a4a;
  border-bottom: 1px solid #323232;
  border-left: 1px solid #333;
  padding: 0 14px 0 4px;
}
.grip-v {
  width: 3px;
  height: 20px;
  background: repeating-linear-gradient(#333 0 1px, transparent 1px 2px);
}
.kind {
  width: 107px;
  padding-left: 7px;
}
.controlbar .rule {
  height: 24px;
  width: 1px;
  background: #3e3e3e;
  margin-right: 7px;
}
.controlbar .rule.tight {
  margin: 0 6px;
}
.combo {
  display: flex;
  flex: none;
  height: 20px;
  background: #434343;
  box-shadow: 0 0 0 1px #585858;
  border-radius: 1px;
  margin-right: 7px;
}
.combo input {
  width: 52px;
  padding: 5px 0 0 4px;
  font-size: 12px;
  color: #f2f2f2;
  background: #3d3d3d;
}
.combo #opacity {
  width: 62px;
}
.drop {
  width: 18px;
  border-left: 1px solid #555;
}
.swatch {
  width: 20px;
}
.white {
  background: #fff;
}
.black {
  background: #000;
  border: 1px solid #fff;
}
.black i {
  width: 7px;
  height: 7px;
  border: 1px solid #fff;
  background: #000;
}
.light-grey {
  background: #e0e0e0;
}
.combo.stroke {
  margin-right: 12px;
}
.combo.styles {
  margin-right: 0;
}
.step {
  width: 19px;
  border: 0;
  border-right: 1px solid #555;
  flex-direction: column;
}
.dotted {
  border-bottom: 1px dotted #bbb;
  line-height: 12px;
}
.controlbar label.dotted {
  margin-right: 7px;
}
.profile {
  width: 86px;
  gap: 6px;
  background: #e0e0e0;
  color: #222;
}
.profile i {
  width: 54px;
  height: 3px;
  background: #000;
}
.profile.wide {
  width: 89px;
}
.basic .profile i {
  width: 50px;
}
.style-label {
  margin-right: 8px;
  white-space: nowrap;
}
.ico {
  height: 24px;
  margin: 0 3px;
}
.pick {
  gap: 3px;
  margin: 0 0 0 8px;
}
.spaced {
  margin-left: 8px;
}
.right-tools {
  display: flex;
  margin-left: auto;
}
.right-tools .ico {
  min-width: 18px;
  margin: 0;
}
.right-tools .ico.on {
  width: 25px;
  margin-left: 6px;
  background: #2b2b2b;
  color: #fff;
  border-radius: 2px;
}
.right-tools .ico.slim {
  min-width: 12px;
}
.right-tools .ico.last {
  margin-left: 13px;
}

/* main columns */
.app {
  flex: 1;
  min-height: 0;
  display: grid;
  grid-template-columns: 72px minmax(0, 1fr) 38px 241px;
  grid-template-rows: minmax(0, 1fr);
  gap: 2px;
}
.strip {
  flex: none;
  height: 12px;
  display: flex;
  align-items: center;
  padding: 0 5px;
  background: #3e3e3e;
  border-bottom: 1px solid #333;
  color: #c0c0c0;
}
.strip.end {
  justify-content: flex-end;
}
.grip {
  flex: none;
  width: 20px;
  height: 4px;
  background: repeating-linear-gradient(90deg, #333 0 1px, transparent 1px 2px);
}

/* toolbox */
.toolbox {
  display: flex;
  flex-direction: column;
  background: #4a4a4a;
  border: solid #333;
  border-width: 0 1px;
}
.toolbox .grip {
  margin: 3px 0 12px 25px;
}
.tools {
  display: grid;
  grid-template-columns: 28px 28px;
  grid-auto-rows: 24px;
  column-gap: 2px;
  margin: 0 6px;
  padding-bottom: 2px;
  border-bottom: 1px solid #404040;
}
.tool {
  position: relative;
}
.tool.on {
  background: #2b2b2b;
  border-radius: 2px;
}
.tool.more::after {
  content: "";
  position: absolute;
  right: 2px;
  bottom: 2px;
  border-left: 3px solid transparent;
  border-bottom: 3px solid #c4c4c4;
}
.paint {
  position: relative;
  height: 56px;
  margin: 4px 0 0 5px;
}
.paint > * {
  position: absolute;
}
.p-fill {
  left: 0;
  top: 0;
  width: 36px;
  height: 36px;
  background: #fff;
  border: 1px solid #222;
}
.p-stroke {
  left: 18px;
  top: 18px;
  width: 36px;
  height: 36px;
  background: #000;
  border: 1px solid #222;
  box-shadow: inset 0 0 0 1px #fff;
}
.p-stroke i {
  width: 18px;
  height: 18px;
  background: #4a4a4a;
  border: 1px solid #fff;
}
.p-swap {
  left: 44px;
  top: 0;
}
.p-default {
  left: 0;
  top: 41px;
}
.triple {
  display: flex;
  width: 60px;
  height: 20px;
  margin: 4px 0 0 5px;
  border: 1px solid #565656;
  border-radius: 2px;
}
.triple + .triple {
  margin-top: 5px;
}
.triple button {
  flex: 1;
  color: #bbb;
  border-right: 1px solid #565656;
}
.triple button:last-child {
  border: 0;
}
.triple button.on {
  background: #2b2b2b;
}
.triple i {
  width: 13px;
  height: 13px;
  border: 1px solid #000;
}
.triple .c-solid {
  border: 3px solid #000;
}
.c-grad {
  background: linear-gradient(90deg, #fff, #333);
}
.c-none {
  background: linear-gradient(-45deg, #fff 42%, #fff 42%);
  background: linear-gradient(to bottom right, #fff 42%, #e00 43% 57%, #fff 58%);
}
.screen {
  margin: 6px auto 0 23px;
  color: #bbb;
}
.dots {
  gap: 2px;
  margin: 21px auto 0 27px;
}
.dots i {
  width: 4px;
  height: 4px;
  border-radius: 50%;
  background: #c4c4c4;
}

/* document */
.document {
  position: relative;
  display: flex;
  flex-direction: column;
  background: #535353;
}
.tabbar {
  flex: none;
  height: 29px;
  background: #3a3a3a;
  border-bottom: 1px solid #333;
  display: flex;
}
.doc-tab {
  display: flex;
  align-items: center;
  gap: 8px;
  padding: 0 14px 0 6px;
  background: #4a4a4a;
  border-right: 1px solid #333;
  color: #e6e6e6;
  font-size: 12px;
  font-weight: 500;
}
.doc-tab button {
  width: 10px;
  font-size: 15px;
}
.view {
  flex: 1;
  min-height: 0;
  display: flex;
}
.stage {
  flex: 1;
  display: flex;
  padding: 38px 18px 37px 19px;
}
.artboard {
  position: relative;
  flex: 1;
  background: #fff;
  border: 1px solid #000;
}
.path {
  position: absolute;
  left: 376px;
  top: 410px;
  overflow: visible;
}
.badge {
  position: absolute;
  width: 35px;
  height: 35px;
  border-radius: 50%;
  background: #f00;
  color: #fff;
  font: 600 28px/35px "Noto Sans", sans-serif;
  text-align: center;
}
.badge.one {
  left: 362px;
  top: 369px;
}
.badge.two {
  right: 197px;
  top: 310px;
}
.vscroll {
  width: 17px;
  display: flex;
  flex-direction: column;
  align-items: center;
  justify-content: space-between;
  padding: 4px 0;
  background: #434343;
  color: #999;
}
.vscroll i {
  width: 15px;
  height: 25px;
  border-radius: 8px;
  background: #585858;
}
.status {
  flex: none;
  height: 17px;
  display: flex;
  background: #4a4a4a;
  border-top: 1px solid #3a3a3a;
  padding-left: 4px;
}
.status input {
  background: #3a3a3a;
  padding: 6px 0 0 4px;
  font-size: 12px;
  color: #e8e8e8;
  height: 18px;
}
.zoomlevel {
  width: 50px;
}
.board {
  width: 40px;
}
.status .drop {
  height: 18px;
  background: #434343;
  border-right: 1px solid #555;
}
.nav {
  width: 42px;
}
.current {
  flex: none;
  width: 200px;
  border-left: 1px solid #404040;
  border-right: 1px solid #404040;
  text-align: center;
}
.play {
  width: 18px;
}
.play::before {
  content: "";
  border: solid transparent;
  border-width: 4px 0 4px 6px;
  border-left-color: #ccc;
}
.hscroll {
  flex: 1;
  display: flex;
  align-items: center;
  justify-content: space-between;
  margin-right: 17px;
  padding: 0 3px;
  background: #434343;
  color: #888;
}
.hscroll i {
  width: 25px;
  height: 15px;
  border-radius: 8px;
  background: #585858;
}

/* tabs shared by all panels */
.tabs {
  flex: none;
  display: flex;
  height: 27px;
  background: #3a3a3a;
  border-bottom: 1px solid #333;
}
.tab {
  gap: 4px;
  padding: 0 8px;
  font-size: 12px;
  color: #a8a8a8;
  border-right: 1px solid #333;
}
.tab.on {
  height: 27px;
  background: #4a4a4a;
  color: #f0f0f0;
  font-weight: 700;
}
.tab.on svg {
  color: #999;
  margin-left: -3px;
}
.tab-tools {
  margin-left: auto;
  display: flex;
  align-items: center;
  gap: 7px;
  padding-right: 5px;
  color: #b0b0b0;
}
.tab-tools i {
  width: 1px;
  height: 11px;
  background: #bbb;
}

/* transform panel */
.transform {
  position: absolute;
  right: 0;
  top: 216px;
  width: 263px;
  height: 116px;
  background: #4a4a4a;
  border: 1px solid #333;
  border-top-width: 4px;
  box-shadow: 0 2px 8px rgba(0, 0, 0, 0.4);
}
.transform-body {
  display: flex;
  padding: 6px 0 0 4px;
}
.refpoint {
  margin-top: 14px;
}
.fields {
  display: grid;
  grid-template-columns: 22px 71px 24px 71px;
  grid-auto-rows: 20px;
  gap: 6px 5px;
}
.fields label {
  display: flex;
  justify-content: flex-end;
  line-height: 20px;
  white-space: nowrap;
}
.fields input,
.angle {
  width: 100%;
  height: 20px;
  padding: 5px 0 0 5px;
  background: #3d3d3d;
  border: 1px solid #565656;
  border-radius: 2px;
  color: #f2f2f2;
}
.fields #tw {
  padding-left: 4px;
  background: #fff;
  border: 1px solid #3a78c0;
  color: #666;
  font-size: 12px;
}
.focusbox {
  position: relative;
}
.focusbox i {
  position: absolute;
  left: 42px;
  top: 4px;
  width: 1px;
  height: 13px;
  background: #000;
}
.fields .angle {
  width: 48px;
  padding: 0;
  display: flex;
  justify-content: flex-end;
}
.chain {
  margin: 13px 0 0 7px;
}
.tip {
  position: absolute;
  right: 4px;
  bottom: 8px;
  padding: 1px 7px;
  background: #bdbdbd;
  color: #333;
}

/* magnifying glass */
.magnifier {
  position: absolute;
  right: 85px;
  top: 282px;
  width: 160px;
  height: 160px;
  padding: 5px;
  border-radius: 50%;
  background: linear-gradient(135deg, #f4f4f4 15%, #ccc 45%, #6a6a6a 90%);
  box-shadow: 8px 10px 14px rgba(0, 0, 0, 0.5);
}
.pointer {
  position: absolute;
  right: 96px;
  top: 282px;
}
.lens {
  height: 150px;
  border-radius: 50%;
  overflow: hidden;
  background: #484848;
}
.lens-top {
  height: 43px;
  margin: 0 0 12px 45px;
  background: #414141;
  border: solid #383838;
  border-width: 0 0 1px 1px;
}
.lens-row {
  display: flex;
  align-items: center;
  gap: 8px;
  margin-bottom: 9px;
}
.lens-row label {
  width: 35px;
  display: flex;
  justify-content: flex-end;
  white-space: nowrap;
  font-size: 20px;
  font-weight: 500;
  color: #a8a8a8;
}
.lens-row input {
  flex: 1;
  min-width: 0;
  height: 36px;
  padding: 8px 0 0 6px;
  background: #3a3a3a;
  border: 2px solid #505050;
  border-right: 0;
  border-radius: 3px 0 0 3px;
  font-size: 20px;
  font-weight: 500;
  color: #f0f0f0;
}
.lens-row input.focus {
  background: #fff;
  border-color: #3668a8;
  color: #707070;
}
.caret {
  position: absolute;
  left: 120px;
  top: 67px;
  width: 2px;
  height: 23px;
  background: #111;
}
.redbox {
  position: absolute;
  left: 42px;
  top: 61px;
  width: 97px;
  height: 40px;
  border: 5px solid #f00;
}

/* icon dock */
.dock {
  background: #4a4a4a;
}
.dock-group {
  display: flex;
  flex-direction: column;
  align-items: center;
  padding: 4px 0 3px;
  border-bottom: 1px solid #333;
}
.dock-group .grip {
  margin-bottom: 1px;
}
.dock-group button {
  width: 28px;
  height: 28px;
}
.dock-group button.on {
  height: 24px;
  margin: 2px 0;
  background: #2b2b2b;
  border: 1px solid #585858;
  border-radius: 2px;
}

/* right panels */
.panels {
  display: flex;
  flex-direction: column;
  min-height: 0;
  border-right: 1px solid #333;
}
.panel {
  flex: none;
  background: #4a4a4a;
  border-bottom: 1px solid #333;
  margin-bottom: 2px;
  display: flex;
  flex-direction: column;
}
.color {
  height: 179px;
}
.hexrow {
  display: flex;
  align-items: center;
  padding: 7px 17px 6px 6px;
}
.mini {
  display: flex;
  margin-right: auto;
  border: 1px solid #222;
}
.mini i {
  width: 12px;
  height: 12px;
}
.blk {
  background: #000;
}
.wht {
  background: #fff;
}
.hexrow label {
  font-size: 12px;
  margin-right: 4px;
}
.hexrow input {
  width: 65px;
  height: 20px;
  padding: 5px 0 0 5px;
  font-size: 12px;
  background: #3d3d3d;
  border: 1px solid #565656;
  border-radius: 2px;
  color: #f2f2f2;
}
.spectrum {
  height: 112px;
  margin: 0 17px 0 6px;
  border: 1px solid #222;
  background: linear-gradient(#fff 0%, rgba(255, 255, 255, 0) 50%, rgba(0, 0, 0, 0) 51%, #000 100%),
    linear-gradient(90deg, #f00, #ff0 16%, #0f0 30% 35%, #0ff 49%, #00f 64% 68%, #f0f 83%, #f00);
}
.swatches {
  height: 179px;
}
.swatch-head {
  display: flex;
  justify-content: space-between;
  padding: 7px 5px 0 5px;
  height: 43px;
}
.pair {
  position: relative;
  width: 30px;
}
.pair i {
  position: absolute;
  width: 20px;
  height: 20px;
  border: 1px solid #222;
}
.pf {
  background: #fff;
}
.pair .ps {
  left: 10px;
  top: 10px;
  padding: 4px;
  background: #000;
  box-shadow: inset 0 0 0 1px #fff;
}
.ps b {
  height: 10px;
  border: 1px solid #fff;
  background: #4a4a4a;
}
.modes {
  display: flex;
  height: 23px;
  border: 1px solid #565656;
  border-radius: 2px;
}
.modes button {
  width: 24px;
}
.modes .on {
  background: #2b2b2b;
}
.listbox {
  display: flex;
  justify-content: space-between;
  margin: 0 5px;
  border: 1px solid #555;
}
.row {
  display: flex;
  gap: 1px;
  height: 14px;
}
.row.group {
  height: 16px;
  padding-top: 2px;
}
.chip {
  width: 13px;
  height: 13px;
}
.picked {
  border: 1px solid #fff;
}
.reg {
  background: #ddd;
}
.g1 {
  background: linear-gradient(90deg, #fff, #000);
}
.g2 {
  background: linear-gradient(90deg, #73a900, transparent 50%, #9c4), repeating-conic-gradient(#fff 0 25%, #9c7 0 50%) 0 0 / 4px 4px;
}
.g3 {
  background: linear-gradient(90deg, #7020c0, #ffa500 60%);
}
.pat {
  background: repeating-conic-gradient(#e33 0 15%, #fd3 0 40%, #2a4 0 70%, #dd4 0 100%) 0 0 / 6px 5px;
}
.scroller {
  width: 12px;
  display: flex;
  flex-direction: column;
  align-items: center;
  background: #424242;
  color: #999;
}
.scroller i {
  flex: 1;
  width: 10px;
  border-radius: 5px;
  background: #555;
  margin: 2px 0;
}
.foot {
  display: flex;
  align-items: center;
  gap: 6px;
  padding: 0 23px 0 7px;
  height: 20px;
  justify-content: flex-end;
}
.foot .gap {
  margin-right: 6px;
}
.foot .far {
  margin-right: auto;
}
.foot .i20.off {
  color: #6c6c6c;
}
.foot .small {
  padding: 3px;
}
.guide {
  height: 70px;
}
.guide-body {
  display: flex;
  align-items: center;
  padding: 6px 5px;
  gap: 6px;
}
.base {
  width: 21px;
  height: 21px;
  background: #000;
  border: 1px solid #000;
  box-shadow: inset 0 0 0 2px #fff;
}
.harmony {
  display: flex;
  align-items: center;
  width: 126px;
  height: 26px;
  padding-left: 3px;
  border: 1px solid #565656;
  margin-right: 2px;
}
.harmony i {
  width: 16px;
  height: 16px;
}
.harmony .drop {
  margin-left: auto;
  height: 24px;
}
.harmony .h1 {
  background: #000;
  border: 1px solid #fff;
}
.h2 {
  background: #4a3b39;
}
.h3 {
  background: #46463d;
}
.h4 {
  background: #233328;
}
.h5 {
  background: #393548;
}
.brushes {
  height: 179px;
}
.brushes .tab.short {
  width: 39px;
  justify-content: flex-start;
}
.brushes .listbox {
  margin-top: 6px;
  height: 125px;
}
.brushlist {
  width: 214px;
  color: #222;
}
.dotsrow {
  display: flex;
  gap: 1px;
  height: 33px;
}
.dotsrow span {
  width: 32px;
  height: 32px;
  display: flex;
  align-items: center;
  justify-content: center;
  background: #e0e0e0;
}
.dotsrow i {
  border-radius: 50%;
  background: #000;
}
.b1 {
  width: 3px;
  height: 3px;
}
.b2 {
  width: 10px;
  height: 10px;
}
.b3 {
  width: 1px;
  height: 5px;
  opacity: 0.4;
}
.b4 {
  width: 12px;
  height: 12px;
}
.brush {
  display: flex;
  align-items: center;
  height: 32px;
  margin-bottom: 1px;
  padding-left: 5px;
  gap: 5px;
  background: #e0e0e0;
}
.bar {
  width: 179px;
  height: 2px;
  background: #000;
}
.brush.calli {
  padding-left: 7px;
  gap: 7px;
  font-size: 12px;
}
.wave {
  margin-left: 22px;
}
.brush.pattern {
  height: 24px;
  margin: 0;
  padding: 0;
}
.layers {
  flex: 1;
  min-height: 0;
  margin: 0;
  border: 0;
}
.layerlist {
  flex: 1;
  margin: 5px 5px 0;
  border: 1px solid #555;
}
.layer {
  position: relative;
  display: flex;
  align-items: center;
  height: 21px;
  background: #3f5a70;
}
.layer::after {
  content: "";
  position: absolute;
  right: 0;
  top: 0;
  border-left: 6px solid transparent;
  border-top: 6px solid #ddd;
}
.eye {
  width: 20px;
  height: 21px;
  border-right: 1px solid #38505f;
}
.lock {
  width: 23px;
}
.mark {
  width: 3px;
  height: 18px;
  margin-right: 6px;
  background: #4f68f0;
}
.thumb {
  width: 18px;
  height: 18px;
  margin: 0 6px 0 10px;
  background: linear-gradient(#aaa, #aaa) 0 5px / 10px 1px no-repeat #fff;
  border: 1px solid #000;
}
.target {
  width: 8px;
  height: 8px;
  margin: 0 6px 0 auto;
  border: 1px solid #bbb;
  border-radius: 50%;
}
.sel {
  width: 6px;
  height: 6px;
  margin-right: 9px;
  background: #4f68f0;
  border: 1px solid #000;
}
.layers .foot {
  padding-left: 6px;
}
.count {
  margin-right: auto;
}
```
